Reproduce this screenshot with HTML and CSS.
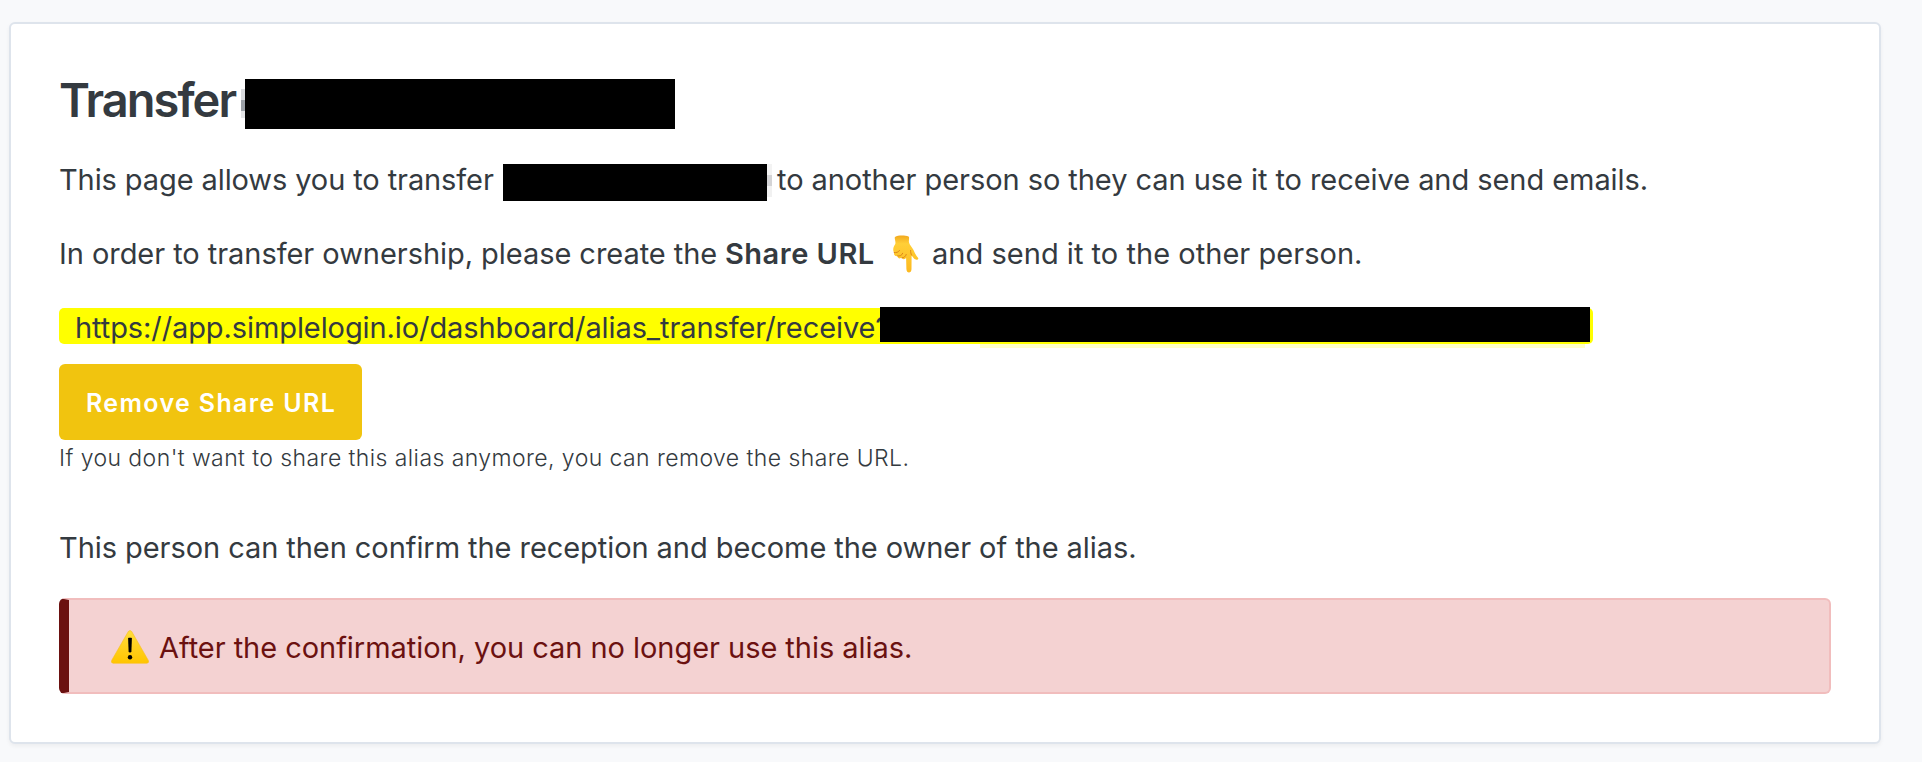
FILE: index.html
```html
<!DOCTYPE html>
<html lang="en">
<head>
<meta charset="utf-8">
<title>Transfer alias</title>
<link rel="stylesheet" href="styles.css">
</head>
<body>
<main class="card">
  <h1 class="title"><span class="title-text">Transfer</span><span class="peek"></span><span class="redacted redacted-title"></span></h1>
  <p class="row"><span class="t-intro">This page allows you to transfer</span><span class="redacted redacted-alias"></span><span class="peek-right"></span><span class="t-rest">to another person so they can use it to receive and send emails.</span></p>
  <p class="row"><span class="t-order">In order to transfer ownership, please create the</span><strong class="t-share">Share URL</strong>
    <svg class="hand" viewBox="0 0 26 38">
      <defs><linearGradient id="skin" x1="0" y1="0" x2="0" y2="1"><stop offset="0" stop-color="#f2a91f"/><stop offset=".22" stop-color="#ffcf37"/><stop offset="1" stop-color="#fdb91f"/></linearGradient></defs>
      <path fill="url(#skin)" d="M2 2C5 0 12 .2 15.500 1.500C16.800 2 15.500 5 16 7.500C16.500 10 19 12 20.500 15C21.800 18 23 20.500 25 22.800C26 24 24.500 25.400 22.800 24.600C21 23.800 19.500 22 18.600 20.200L18.500 34C18.500 38.700 13.500 38.700 13.400 34L13.100 23C11 25 9.200 24.500 8.700 22.600C6.500 24.300 4.700 23 4.400 21C1.800 21.700 .7 19.500 1 17.200C-.4 15.600 .2 11.800 2 9.500C3.400 7.600 1 3.500 2 2Z"/>
      <path fill="none" stroke="#dc8618" stroke-width="1" stroke-linecap="round" d="M1.200 17.500C3 17.800 5.500 17.500 6.500 15.500M4.600 21C6.500 21.400 9 20.500 9.700 18.300M8.800 22.800C11 22.900 12.600 21.500 13.200 19.500M18.600 20.200C17.800 18.500 17.500 17 17.600 15.500"/>
    </svg><span class="t-send">and send it to the other person.</span></p>
  <div class="url"><span class="t-url">https://app.simplelogin.io/dashboard/alias_transfer/receive?</span><span class="redacted redacted-token"></span><span class="url-edge"></span></div>
  <button class="btn" type="button"><span class="t-btn">Remove Share URL</span></button>
  <div class="small"><span class="t-small">If you don't want to share this alias anymore, you can remove the share URL.</span></div>
  <p class="row row-person"><span class="t-person">This person can then confirm the reception and become the owner of the alias.</span></p>
  <div class="alert">
    <svg class="warn" viewBox="0 0 38 34">
      <defs><linearGradient id="sun" x1="0" y1="0" x2="0" y2="1"><stop offset="0" stop-color="#ffdc3c"/><stop offset="1" stop-color="#ffc500"/></linearGradient></defs>
      <path fill="url(#sun)" stroke="#f8bf20" stroke-width=".6" d="M17.300 1.500Q19 -.6 20.700 1.500L37.400 30.500Q38.300 33 35.800 33.300H2.200Q-.3 33 .6 30.500Z"/>
      <path d="M17.100 8.500Q17.100 7.800 17.800 7.800H20.200Q20.900 7.800 20.900 8.500L20.400 21.300Q20.300 22.500 19 22.500Q17.700 22.500 17.600 21.300Z"/>
      <circle cx="19" cy="27.300" r="2.200"/>
    </svg><span class="t-alert">After the confirmation, you can no longer use this alias.</span></div>
</main>
</body>
</html>
```
FILE: styles.css
```css
* { box-sizing: border-box; }
body {
  margin: 0;
  padding: 22px 41px 18px 9px;
  background: #f8f9fb;
  color: #343a40;
  font: 400 29px/48px Inter, "Liberation Sans", sans-serif;
  white-space: nowrap;
}
.card {
  height: 722px;
  padding: 50px 48px 48px;
  background: #fff;
  border: 2px solid #dee4ec;
  border-radius: 6px;
  box-shadow: 0 2px 4px rgba(0, 0, 0, .05);
}
.title {
  display: flex;
  height: 56px;
  margin: 0 0 26px;
  font-size: 47px;
  line-height: 51px;
  font-weight: 600;
}
.title-text { width: 182px; letter-spacing: -1.950px; }
.peek { width: 4px; height: 29px; margin-top: 15px; background: linear-gradient(#d8dadd 0 11px, #9ba0a6 11px 22px, #e4e5e7 22px); }
.redacted { flex: none; background: #000; }
.redacted-title { width: 430px; height: 49.500px; margin-top: 5px; }
.row { display: flex; align-items: center; height: 48px; margin: 0 0 26px; }
.t-intro { width: 444px; letter-spacing: -.100px; }
.redacted-alias { width: 264px; height: 37px; margin-top: 4px; }
.peek-right { width: 5px; height: 33px; background: linear-gradient(#f3f3f3 0 11px, #d4d4d6 11px 22px, #f1f1f1 22px); }
.t-rest { padding-left: 5px; letter-spacing: -.060px; }
.t-order { width: 666px; letter-spacing: -.050px; }
.t-share { width: 168px; font-weight: 600; letter-spacing: .500px; }
.hand { width: 26px; height: 38px; flex: none; }
.t-send { padding-left: 13px; letter-spacing: .030px; }
.url {
  display: flex;
  width: 1534px;
  height: 36px;
  margin: 30px 0 20px;
  padding-left: 16px;
  background: #ff0;
  border-radius: 5px;
  line-height: 39px;
}
.t-url { width: 805px; letter-spacing: -.090px; }
.redacted-token {
  width: 710px;
  height: 34.500px;
  margin-top: -1px;
}
.url-edge { width: 605px; height: 4px; margin: 36px 0 0 -610px; background: #ffffc8; }
.btn {
  display: block;
  width: 303px;
  height: 76px;
  padding: 2px 0 0 27px;
  border: 0;
  border-radius: 6px;
  background: #f1c40f;
  color: #fff;
  font: 600 25px/74px Inter, sans-serif;
  letter-spacing: 1.350px;
  text-align: left;
}
.small { height: 36px; font-size: 23px; line-height: 36px; font-weight: 300; letter-spacing: .420px; }
.row-person { margin-top: 48px; letter-spacing: -.065px; }
.alert {
  display: flex;
  align-items: center;
  height: 96px;
  padding: 0 0 0 42px;
  background: #f4d2d2;
  border: 2px solid #f1bdbd;
  border-left: 10px solid #6b1110;
  border-radius: 6px;
  color: #6b1110;
}
.warn { width: 38px; height: 34px; flex: none; margin-top: 1px; }
.t-alert { padding: 3px 0 0 10px; letter-spacing: -.045px; }
```
